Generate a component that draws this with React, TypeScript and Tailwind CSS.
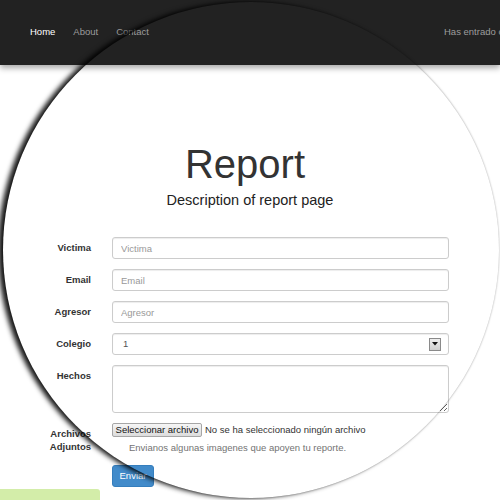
import React from "react";

function Row({ label, children, labelClass = "pt-[5px] leading-[12px]" }: { label: React.ReactNode; children: React.ReactNode; labelClass?: string }) {
  return (
    <div className="flex items-start">
      <div className={`w-[91px] shrink-0 text-right font-bold text-[9.5px] text-[#333] ${labelClass}`}>{label}</div>
      <div className="ml-[21px] w-[337px]">{children}</div>
    </div>
  );
}

const inputCls =
  "block w-full h-[22px] border border-[#ccc] rounded-[3px] bg-white px-[8px] text-[9.5px] text-[#555] shadow-[inset_0_1px_1px_rgba(0,0,0,0.075)] placeholder:text-[#999] outline-none";

export default function App() {
  return (
    <div className="relative w-[500px] h-[500px] overflow-hidden bg-white font-['Liberation_Sans',Arial,sans-serif]">
      <div className="relative z-10 h-[65px] bg-[#222] flex items-center text-[9.5px] shadow-[0_3px_6px_rgba(0,0,0,0.35)]">
        <div className="w-[444px] shrink-0 flex gap-[18px] pl-[30px]">
          <span className="text-white">Home</span>
          <span className="text-[#9d9d9d]">About</span>
          <span className="text-[#9d9d9d]">Contact</span>
        </div>
        <span className="whitespace-nowrap text-[#9d9d9d]">Has entrado como usuario</span>
      </div>

      <h1 className="mt-[79px] pr-[10px] text-center text-[40px] leading-[40px] text-[#333]">Report</h1>
      <p className="mt-[8px] text-center text-[14.5px] leading-[17px] text-[#222]">Description of report page</p>

      <form className="mt-[28px] flex flex-col gap-[10px]">
        <Row label="Victima">
          <input className={inputCls} placeholder="Victima" readOnly />
        </Row>
        <Row label="Email">
          <input className={inputCls} placeholder="Email" readOnly />
        </Row>
        <Row label="Agresor">
          <input className={inputCls} placeholder="Agresor" readOnly />
        </Row>
        <Row label="Colegio">
          <div className="flex h-[22px] w-full items-center justify-between border border-[#ccc] rounded-[3px] pl-[10px] pr-[7px] text-[9.5px] text-[#555] shadow-[inset_0_1px_1px_rgba(0,0,0,0.075)]">
            <span>1</span>
            <span className="flex h-[13px] w-[12px] items-center justify-center border border-[#8a8a8a] bg-gradient-to-b from-[#eee] to-[#cfcfcf]">
              <svg width="6" height="4" viewBox="0 0 6 4">
                <path d="M0 0 H6 L3 3.5 Z" fill="#111" />
              </svg>
            </span>
          </div>
        </Row>
        <Row label="Hechos">
          <textarea className="block h-[48px] w-full border border-[#ccc] rounded-[3px] shadow-[inset_0_1px_1px_rgba(0,0,0,0.075)] outline-none" readOnly />
        </Row>
        <Row label={<>Archivos<br />Adjuntos</>} labelClass="pt-[4px] leading-[13px]">
          <div className="flex items-center text-[9.5px]">
            <span className="flex h-[14px] w-[90px] shrink-0 items-center justify-center rounded-[2px] border border-[#a6a6a6] bg-gradient-to-b from-[#f6f6f6] to-[#dcdcdc] text-[#111] whitespace-nowrap">
              Seleccionar archivo
            </span>
            <span className="ml-[3px] whitespace-nowrap text-[#333]">No se ha seleccionado ningún archivo</span>
          </div>
          <p className="mt-[5px] ml-[17px] text-[9.5px] leading-[12px] text-[#737373]">
            Envianos algunas imagenes que apoyen tu reporte.
          </p>
        </Row>
        <div className="mt-[1px] ml-[112px]">
          <span className="flex h-[22px] w-[42px] items-center justify-center rounded-[3px] border border-[#357ebd] bg-[#428bca] text-[9.5px] text-white">
            Enviar
          </span>
        </div>
      </form>

      <div className="mt-[2px] h-[20px] w-[100px] rounded-tr-[3px] bg-[#d3eda9]" />

      <div className="pointer-events-none absolute left-[3px] top-[2px] z-20 h-[496px] w-[496px] rounded-full shadow-[-5px_0_5px_rgba(0,0,0,0.9),0_0_2px_rgba(0,0,0,0.35)]" />
    </div>
  );
}
